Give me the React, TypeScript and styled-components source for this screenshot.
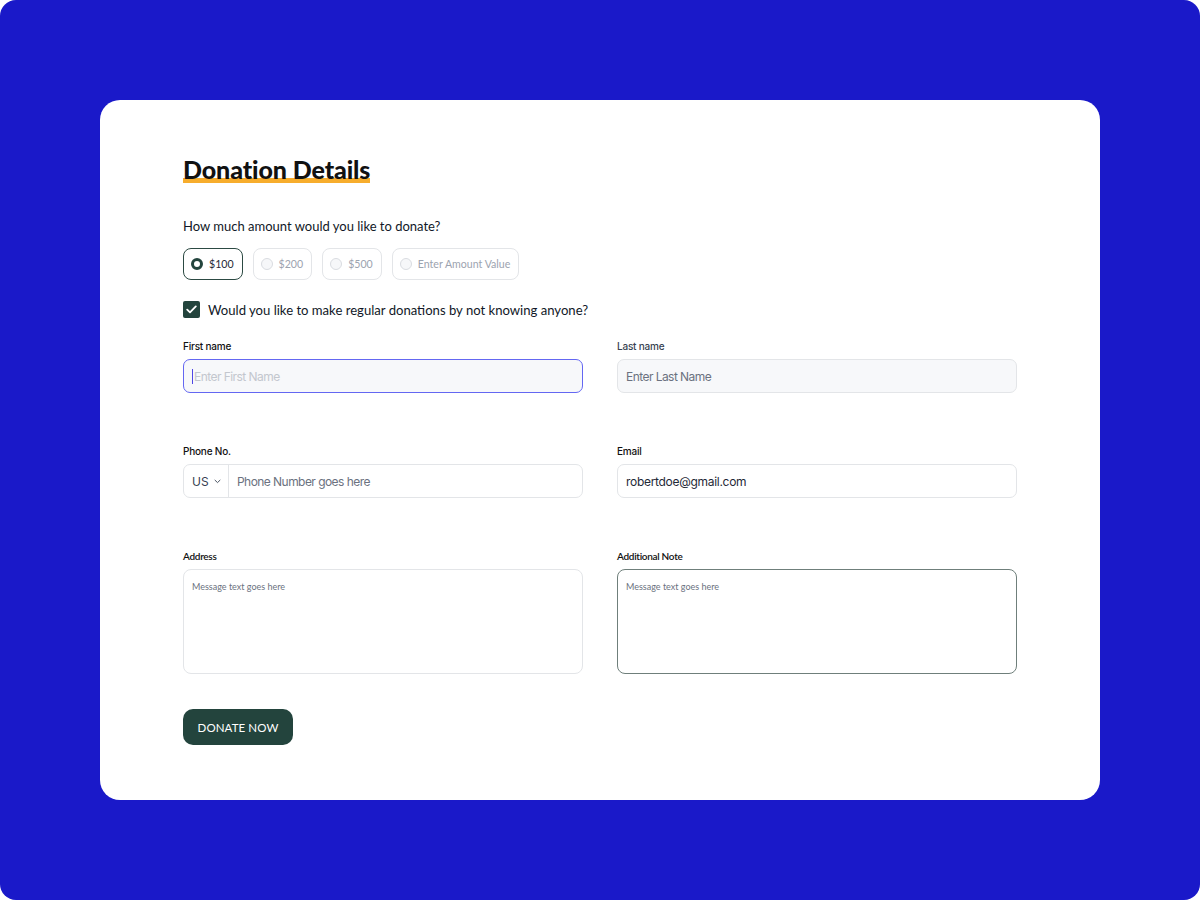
import * as React from 'react';
import styled, { createGlobalStyle } from 'styled-components';

const GlobalStyle = createGlobalStyle`
    * {
        box-sizing: border-box;
    }

    body {
        margin: 0;
        background: #ffffff;
        font-family: Lato, 'Liberation Sans', sans-serif;
    }
`;

const Page = styled.div`
    width: 1200px;
    height: 900px;
    padding: 100px;
    background: #1a19c9;
    border-radius: 16px;
`;

const Card = styled.form`
    width: 1000px;
    height: 700px;
    background: #ffffff;
    border-radius: 20px;
    padding: 54px 83px 0 83px;
    display: flex;
    flex-direction: column;
`;

const Title = styled.h1`
    margin: 0;
    align-self: flex-start;
    font-family: Lato, sans-serif;
    font-size: 25px;
    font-weight: 900;
    line-height: 30px;
    color: #111111;
    letter-spacing: -0.1px;
    background: linear-gradient(#f7ad2d, #f7ad2d) no-repeat left bottom 1px / 100% 5px;
`;

const Question = styled.p`
    margin: 34px 0 0 0;
    font-size: 13px;
    line-height: 16px;
    color: #111827;
`;

const AmountRow = styled.div`
    display: flex;
    gap: 10px;
    margin-top: 14px;
`;

const Pill = styled.label<{ $active?: boolean }>`
    display: inline-flex;
    align-items: center;
    gap: 6px;
    height: 32px;
    padding: 0 8px 0 7px;
    border-radius: 8px;
    border: 1px solid ${(p) => (p.$active ? '#2c4a43' : '#e3e5e8')};
    font-size: 10.6px;
    color: ${(p) => (p.$active ? '#1f2937' : '#9ca3af')};
    cursor: pointer;
`;

const Radio = styled.span<{ $active?: boolean }>`
    width: 12px;
    height: 12px;
    border-radius: 50%;
    flex-shrink: 0;
    border: ${(p) => (p.$active ? '3.5px solid #23443d' : '1px solid #d9dce1')};
    background: ${(p) => (p.$active ? '#ffffff' : '#f6f7f9')};
`;

const CheckRow = styled.label`
    display: flex;
    align-items: center;
    gap: 8px;
    margin-top: 21px;
    font-size: 13.1px;
    color: #111827;
`;

const CheckBox = styled.span`
    width: 17px;
    height: 17px;
    border-radius: 2px;
    background: #23443d;
    display: flex;
    align-items: center;
    justify-content: center;
`;

const Grid = styled.div`
    display: grid;
    grid-template-columns: 400px 400px;
    column-gap: 34px;
    row-gap: 52px;
    margin-top: 22px;
`;

const Field = styled.div`
    display: flex;
    flex-direction: column;
    gap: 6px;
`;

const Label = styled.span<{ $muted?: boolean }>`
    font-family: Inter, sans-serif;
    font-size: 10px;
    line-height: 13px;
    font-weight: 500;
    letter-spacing: -0.2px;
    color: ${(p) => (p.$muted ? '#374151' : '#111111')};
`;

const NoteLabel = styled.span`
    font-family: Lato, sans-serif;
    font-size: 10px;
    line-height: 13px;
    font-weight: 600;
    letter-spacing: -0.3px;
    color: #111111;
`;

const InputBox = styled.div<{ $focused?: boolean; $filled?: boolean }>`
    display: flex;
    align-items: center;
    height: 34px;
    border-radius: 7px;
    border: 1px solid ${(p) => (p.$focused ? '#6467f2' : '#e3e5e8')};
    background: ${(p) => (p.$filled ? '#f7f8fa' : '#ffffff')};
    overflow: hidden;
`;

const Caret = styled.span`
    width: 1px;
    height: 15px;
    margin-left: 8px;
    background: #4f46e5;
`;

const TextInput = styled.input<{ $faint?: boolean; $pad?: number }>`
    flex: 1;
    min-width: 0;
    height: 100%;
    border: none;
    outline: none;
    background: transparent;
    padding: 0 0 0 ${(p) => p.$pad ?? 8}px;
    font-family: Inter, sans-serif;
    font-size: 12px;
    letter-spacing: -0.3px;
    color: #1f2937;

    &::placeholder {
        letter-spacing: -0.55px;
        color: ${(p) => (p.$faint ? '#c3c7ce' : '#6b7280')};
    }
`;

const Country = styled.div`
    display: flex;
    align-items: center;
    gap: 5px;
    width: 45px;
    height: 100%;
    padding-left: 8px;
    border-right: 1px solid #e3e5e8;
    font-family: Inter, sans-serif;
    font-size: 12px;
    color: #374151;
`;

const TextArea = styled.textarea<{ $focused?: boolean }>`
    height: 105px;
    resize: none;
    border-radius: 8px;
    border: 1px solid ${(p) => (p.$focused ? '#6f7f7b' : '#e3e5e8')};
    padding: 11px 8px;
    font-family: Lato, sans-serif;
    font-size: 9px;
    outline: none;
    color: #1f2937;

    &::placeholder {
        color: #6b7280;
    }
`;

const SubmitButton = styled.button`
    align-self: flex-start;
    margin-top: 35px;
    width: 110px;
    height: 36px;
    border: none;
    border-radius: 10px;
    background: #23443d;
    color: #ffffff;
    font-family: Lato, sans-serif;
    font-size: 11.5px;
    letter-spacing: 0.1px;
    cursor: pointer;
`;

const amounts = ['$100', '$200', '$500', 'Enter Amount Value'];

function App(): React.ReactElement {
    return (
        <>
            <GlobalStyle />
            <Page>
                <Card onSubmit={(e) => e.preventDefault()}>
                    <Title>Donation Details</Title>
                    <Question>How much amount would you like to donate?</Question>
                    <AmountRow>
                        {amounts.map((a, i) => (
                            <Pill key={a} $active={i === 0}>
                                <Radio $active={i === 0} />
                                {a}
                            </Pill>
                        ))}
                    </AmountRow>
                    <CheckRow>
                        <CheckBox>
                            <svg width="11" height="9" viewBox="0 0 11 9" fill="none">
                                <path
                                    d="M1.2 4.6 4 7.3 9.8 1.4"
                                    stroke="#ffffff"
                                    strokeWidth="1.8"
                                    strokeLinecap="round"
                                    strokeLinejoin="round"
                                />
                            </svg>
                        </CheckBox>
                        Would you like to make regular donations by not knowing anyone?
                    </CheckRow>
                    <Grid>
                        <Field>
                            <Label>First name</Label>
                            <InputBox $focused $filled>
                                <Caret />
                                <TextInput $faint $pad={1} placeholder="Enter First Name" />
                            </InputBox>
                        </Field>
                        <Field>
                            <Label $muted>Last name</Label>
                            <InputBox $filled>
                                <TextInput placeholder="Enter Last Name" />
                            </InputBox>
                        </Field>
                        <Field>
                            <Label>Phone No.</Label>
                            <InputBox>
                                <Country>
                                    US
                                    <svg width="7" height="5" viewBox="0 0 7 5" fill="none">
                                        <path
                                            d="M1 1.2 3.5 3.6 6 1.2"
                                            stroke="#4b5563"
                                            strokeWidth="1"
                                            strokeLinecap="round"
                                            strokeLinejoin="round"
                                        />
                                    </svg>
                                </Country>
                                <TextInput placeholder="Phone Number goes here" />
                            </InputBox>
                        </Field>
                        <Field>
                            <Label>Email</Label>
                            <InputBox>
                                <TextInput defaultValue="robertdoe@gmail.com" />
                            </InputBox>
                        </Field>
                        <Field>
                            <NoteLabel>Address</NoteLabel>
                            <TextArea placeholder="Message text goes here" />
                        </Field>
                        <Field>
                            <NoteLabel>Additional Note</NoteLabel>
                            <TextArea $focused placeholder="Message text goes here" />
                        </Field>
                    </Grid>
                    <SubmitButton type="submit">DONATE NOW</SubmitButton>
                </Card>
            </Page>
        </>
    );
}

export default App;
